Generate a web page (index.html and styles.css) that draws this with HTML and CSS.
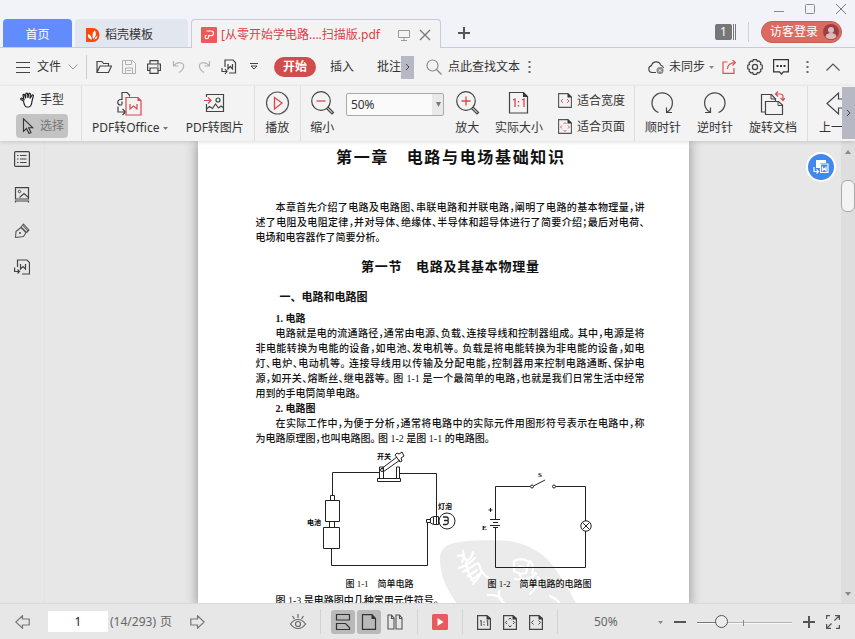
FILE: index.html
```
<!DOCTYPE html>
<html lang="zh-CN">
<head>
  <meta charset="UTF-8">
  <meta name="viewport" content="width=device-width, initial-scale=1.0">
  <title>[从零开始学电路....扫描版.pdf</title>
  <link rel="stylesheet" href="styles.css">
</head>
<body>
  <header class="titlebar">
    <nav class="tabs">
      <button class="tab tab-home">首页</button>
      <button class="tab tab-docer">
        <svg width="14" height="16" viewBox="0 0 14 16"><path d="M0 1h7a6.500 7 0 0 1 0 14H0z" fill="#f84a0c"/><path d="M6 12.500C2.500 12 1.500 9.500 2 7c2.200.5 3.600 2.500 4 5.500zM7 12C6 8 6.500 5 9 3.500c1.500 3.500 1 6.500-2 8.500zM8.500 12.500c.5-2 1.500-3 3-3.500-.2 2-1.200 3.200-3 3.500z" fill="#fff"/></svg>
        稻壳模板
      </button>
      <div class="tab tab-file">
        <svg width="16" height="16" viewBox="0 0 16 16"><rect width="16" height="16" rx="1" fill="#ee5a5a"/><path d="M5.500 4h4.700a2.300 2.300 0 0 1 0 4.600H7.500v1.400a1.700 1.700 0 1 1-1.700-1.700" fill="none" stroke="#fff" stroke-width="1.100"/></svg>
        <span class="tab-title">[从零开始学电路....扫描版.pdf</span>
        <svg class="screen-icon" width="12" height="12" viewBox="0 0 12 12"><path d="M.500 1.500h11v7H.500zM6 8.500v3M3 11.500h6" fill="none" stroke="#999"/></svg>
        <button class="plain" aria-label="关闭标签"><svg width="12" height="12" viewBox="0 0 12 12"><path d="M1 1l10 10M11 1L1 11" stroke="#777" stroke-width="1.300"/></svg></button>
      </div>
      <button class="plain new-tab" aria-label="新建"><svg width="12" height="12" viewBox="0 0 12 12"><path d="M6 0v12M0 6h12" stroke="#555" stroke-width="2"/></svg></button>
    </nav>
    <div class="window-side">
      <div class="window-buttons">
        <button class="plain" aria-label="最小化"><svg width="10" height="10" viewBox="0 0 10 10"><path d="M0 7.500h10" stroke="#8a8a8e"/></svg></button>
        <button class="plain" aria-label="最大化"><svg width="10" height="10" viewBox="0 0 10 10"><rect x=".5" y=".5" width="9" height="9" rx="1" fill="none" stroke="#8a8a8e"/></svg></button>
        <button class="plain" aria-label="关闭"><svg width="10" height="10" viewBox="0 0 10 10"><path d="M0 0l10 10M10 0L0 10" stroke="#77777c"/></svg></button>
      </div>
      <div class="account">
        <span class="tab-count"><span class="count">1</span><svg width="4" height="16" viewBox="0 0 4 16"><path d="M1.500 0v16M3.500 0v16" stroke="#777"/></svg></span>
        <span class="divider"></span>
        <button class="login">访客登录
          <svg width="16" height="16" viewBox="0 0 16 16"><circle cx="8" cy="8" r="8" fill="#9b3f47"/><circle cx="8" cy="6" r="3" fill="#dcb9bb"/><path d="M2.500 13a5.500 4 0 0 1 11 0 8 8 0 0 1-11 0z" fill="#dcb9bb"/></svg>
        </button>
      </div>
    </div>
  </header>

  <div class="menubar">
    <button class="file-menu">
      <svg width="14" height="12" viewBox="0 0 14 12"><path d="M0 1.500h14M0 6.500h14M0 11.500h14" stroke="#444"/></svg>
      文件
      <svg width="10" height="6" viewBox="0 0 10 6"><path d="M.5.500L5 5 9.500.500" fill="none" stroke="#999"/></svg>
    </button>
    <div class="quick">
      <button aria-label="打开"><svg width="16" height="14" viewBox="0 0 16 14"><path d="M1 12V1.500h5l1.500 2h5V6M1 12.500L4 6h11.500l-3 6.500z" fill="none" stroke="#444" stroke-width="1.200"/></svg></button>
      <button aria-label="保存"><svg width="14" height="14" viewBox="0 0 14 14"><path d="M.5.500h10l3 3v10H.5zM3.500.500v4h6v-4M3.500 13.500V8h7v5.500M5 10.500h4" fill="none" stroke="#b0b0b0"/></svg></button>
      <button aria-label="打印"><svg width="14" height="14" viewBox="0 0 14 14"><path d="M3 4V.600h8V4M3 10.500H.600V4h12.800v6.500H11M3 8h8v5.400H3zM10 6h1.500" fill="none" stroke="#444" stroke-width="1.200"/></svg></button>
      <button aria-label="撤销"><svg width="14" height="14" viewBox="0 0 14 14"><path d="M1.500 1v5h5M1.500 6C4 3 7 2 9.500 3s4 5-2.500 9.500" fill="none" stroke="#b5b5b5" stroke-width="1.200"/></svg></button>
      <button aria-label="重做"><svg width="14" height="14" viewBox="0 0 14 14"><path d="M12.500 1v5h-5M12.500 6C10 3 7 2 4.500 3s-4 5 2.500 9.500" fill="none" stroke="#b5b5b5" stroke-width="1.200"/></svg></button>
      <button aria-label="转为Word"><svg width="16" height="16" viewBox="0 0 16 16"><path d="M4 8V1h8l2.500 2.500V14H8M7 5v5l2.300-2.500L11.500 10V5M1 9v3.500h4.500M4 10l2 2.500L4 15" fill="none" stroke="#444" stroke-width="1.200"/></svg></button>
      <button aria-label="更多"><svg width="8" height="8" viewBox="0 0 8 8"><path d="M0 .5h8M1 3l3 3 3-3z" fill="none" stroke="#444"/></svg></button>
    </div>
    <nav class="menu">
      <button class="menu-item active">开始</button>
      <button class="menu-item">插入</button>
      <button class="menu-item last">批注</button>
      <button class="scroll-more" aria-label="更多菜单"><svg width="5" height="8" viewBox="0 0 5 8"><path d="M1 1l3 3-3 3" fill="none" stroke="#444"/></svg></button>
    </nav>
    <div class="search">
      <svg width="16" height="16" viewBox="0 0 16 16"><circle cx="6.500" cy="6.500" r="5.500" fill="none" stroke="#8c8c8c" stroke-width="1.200"/><path d="M10.500 10.500l5 5" stroke="#8c8c8c" stroke-width="1.400"/></svg>
      <input class="search-box" type="text" aria-label="查找文本" placeholder="点此查找文本">
      <button class="plain" aria-label="查找选项"><svg width="3" height="14" viewBox="0 0 3 14"><path d="M.500 1h2v2h-2zM.500 6h2v2h-2zM.500 11h2v2h-2z" fill="#666"/></svg></button>
    </div>
    <button class="sync">
      <svg width="17" height="15" viewBox="0 0 17 15"><path d="M8 12.500H4A3.500 3.500 0 0 1 3.500 5.600a4.800 4.800 0 0 1 9.300-.300A3.500 3.500 0 0 1 15.500 8" fill="none" stroke="#444" stroke-width="1.100"/><circle cx="12" cy="10.500" r="3.500" fill="#8a8a8a"/><path d="M10.800 9.300l2.400 2.400M13.200 9.300l-2.400 2.400" stroke="#fff"/></svg>
      未同步
      <svg width="5" height="3" viewBox="0 0 5 3"><path d="M0 0h5L2.500 3z" fill="#888"/></svg>
    </button>
    <div class="tools">
      <button aria-label="分享"><svg width="14" height="14" viewBox="0 0 14 14"><path d="M5.500 2H1v11.400h11V8M5.500 9c0-4 3-6.500 8-6.500M10.500 0l3 2.500-3 3" fill="none" stroke="#d9534f" stroke-width="1.200"/></svg></button>
      <button aria-label="设置"><svg width="16" height="16" viewBox="0 0 16 16"><path d="M6.300.700h3.400l.6 1.800 1.700-.500 2 2-.500 1.700 1.800.600v3.400l-1.800.600.500 1.700-2 2-1.700-.500-.6 1.800H6.300l-.6-1.800-1.700.500-2-2 .5-1.700-1.800-.6V6.300l1.800-.6L2 4l2-2 1.700.500z" fill="none" stroke="#444" stroke-width="1.200"/><circle cx="8" cy="8" r="2.600" fill="none" stroke="#444" stroke-width="1.200"/></svg></button>
      <button aria-label="反馈"><svg width="16" height="16" viewBox="0 0 16 16"><path d="M.600.600h14.800v12.300h-5L8.500 15l-2-2.100H.600z" fill="none" stroke="#333" stroke-width="1.200"/><path d="M3.500 6h2v2h-2zM7 6h2v2H7zM10.500 6h2v2h-2z" fill="#333"/></svg></button>
      <button aria-label="更多"><svg width="3" height="14" viewBox="0 0 3 14"><path d="M.500 1h2v2h-2zM.500 6h2v2h-2zM.500 11h2v2h-2z" fill="#666"/></svg></button>
      <button aria-label="收起功能区"><svg width="14" height="8" viewBox="0 0 14 8"><path d="M.5 7.500L7 1l6.500 6.500" fill="none" stroke="#555" stroke-width="1.200"/></svg></button>
    </div>
  </div>

  <div class="ribbon">
    <div class="group group-mode">
      <button class="mode">
        <svg width="16" height="16" viewBox="0 0 16 16"><path d="M3.500 9L1 7.500C.3 7 1 5.800 2 6.300l2 1.200L3 3.500c-.2-1.300 1.300-1.500 1.700-.3l1 3L5.800 2c0-1.200 1.600-1.200 1.800 0l.3 4 .8-4c.3-1.100 1.700-.9 1.700.300L10 6.500l1.800-3c.6-1 1.800-.4 1.500.700L12 9c-.3 3-1 5.500-3 6H6.500C5 14.500 4 12 3.500 9z" fill="#fff" stroke="#222" stroke-width="1.200"/></svg>
        手型
      </button>
      <button class="mode selected">
        <svg width="16" height="16" viewBox="0 0 16 16"><path d="M3.500.800v12.500l3-2.800L9 15.500l2-1-2.300-4.800h4z" fill="none" stroke="#333" stroke-width="1.100"/></svg>
        选择
      </button>
    </div>
    <div class="group group-pdf">
      <button class="tool">
        <svg width="25" height="25" viewBox="0 0 25 25"><path d="M5 9V1.500h5l2.500 2.500v1.500M5 8.500H3.500A2.300 2.300 0 1 0 3.500 14H5M5 10.500v3M1 15.500v5.500h7M5.500 18l3 3-3 3" fill="none" stroke="#444" stroke-width="1.200"/><path d="M9 6.500h12l3 3V24H9zM13 13v5l3.500-3 3.500 3v-5" fill="none" stroke="#d9484d" stroke-width="1.200"/><path d="M20.500 6.500V10H24z" fill="#d9484d"/></svg>
        <span>PDF转Office <svg width="5" height="3" viewBox="0 0 5 3" class="caret"><path d="M0 0h5L2.500 3z" fill="#777"/></svg></span>
      </button>
      <button class="tool">
        <svg width="25" height="25" viewBox="0 0 25 25"><path d="M4.500 6V3.500h17v17h-17V13M4.500 18l3-2.500 3 2 3-4.500 3 4 2.500-2 2.500 2" fill="none" stroke="#444" stroke-width="1.200"/><circle cx="16" cy="9" r="2" fill="none" stroke="#444" stroke-width="1.200"/><path d="M2 9.500h6.500M6 6.500l3 3-3 3" fill="none" stroke="#d9484d" stroke-width="1.200"/></svg>
        <span>PDF转图片</span>
      </button>
    </div>
    <div class="group">
      <button class="tool">
        <svg width="25" height="25" viewBox="0 0 25 25"><circle cx="12.500" cy="12" r="11" fill="none" stroke="#555" stroke-width="1.200"/><path d="M9.500 6.500v11.500l7.500-6z" fill="none" stroke="#d9484d" stroke-width="1.300"/></svg>
        <span>播放</span>
      </button>
    </div>
    <div class="group group-zoom">
      <button class="tool">
        <svg width="25" height="25" viewBox="0 0 25 25"><circle cx="11" cy="10" r="9.300" fill="none" stroke="#444" stroke-width="1.200"/><path d="M6.500 10h9" stroke="#d9484d" stroke-width="1.300"/><path d="M18 16l5.500 5.500-1.500 1.500-5.500-5.500" fill="none" stroke="#444" stroke-width="1.200"/></svg>
        <span>缩小</span>
      </button>
      <span class="combo">
        <select aria-label="缩放比例"><option>50%</option></select>
        <svg class="combo-arrow" width="5" height="5" viewBox="0 0 5 5"><path d="M0 0h5L2.500 5z" fill="#777"/></svg>
      </span>
      <button class="tool">
        <svg width="25" height="25" viewBox="0 0 25 25"><circle cx="11" cy="10" r="9.300" fill="none" stroke="#444" stroke-width="1.200"/><path d="M6.500 10h9M11 5.500v9" stroke="#d9484d" stroke-width="1.300"/><path d="M18 16l5.500 5.500-1.500 1.500-5.500-5.500" fill="none" stroke="#444" stroke-width="1.200"/></svg>
        <span>放大</span>
      </button>
      <button class="tool tool-gap">
        <svg width="25" height="25" viewBox="0 0 25 25"><path d="M3.500 1.500h14l4 4V22h-18z" fill="none" stroke="#444" stroke-width="1.200"/><path d="M17 1v5h5z" fill="#333"/><path d="M7 9l2-1v8M16 9l2-1v8M12.500 10v1.500M12.500 14v1.500" fill="none" stroke="#d9484d" stroke-width="1.300"/></svg>
        <span>实际大小</span>
      </button>
      <div class="fit">
        <button class="fit-item"><svg width="14" height="16" viewBox="0 0 14 16"><path d="M.600.600h9.400l3.400 3.400v10.400H.600z" fill="none" stroke="#555" stroke-width="1.100"/><path d="M9.500 0v4.500H14z" fill="#333"/><path d="M5 6L3 8l2 2M9 6l2 2-2 2" fill="none" stroke="#e06063"/></svg>适合宽度</button>
        <button class="fit-item"><svg width="14" height="16" viewBox="0 0 14 16"><path d="M.600.600h9.400l3.400 3.400v10.400H.600z" fill="none" stroke="#555" stroke-width="1.100"/><path d="M9.500 0v4.500H14z" fill="#333"/><path d="M4 6.500L2.500 8 4 9.500M10 6.500L11.500 8 10 9.500M5.500 5L7 3.500 8.500 5M5.500 11L7 12.500 8.500 11" fill="none" stroke="#e06063"/></svg>适合页面</button>
      </div>
    </div>
    <div class="group">
      <button class="tool">
        <svg width="25" height="25" viewBox="0 0 25 25"><path d="M8.500 21.500a10.200 10.200 0 1 1 8.500-.5M16.500 16.500V21.500H22" fill="none" stroke="#444" stroke-width="1.200"/></svg>
        <span>顺时针</span>
      </button>
      <button class="tool">
        <svg width="25" height="25" viewBox="0 0 25 25"><path d="M16.500 21.500a10.200 10.200 0 1 0-8.500-.5M8.500 16.500V21.500H3" fill="none" stroke="#444" stroke-width="1.200"/></svg>
        <span>逆时针</span>
      </button>
      <button class="tool">
        <svg width="25" height="25" viewBox="0 0 25 25"><path d="M5 21H1.500V3.500h10L15.500 8v2M5.500 10.500h13l4 3.500v9.500h-17z" fill="none" stroke="#444" stroke-width="1.200"/><path d="M11 3.500V8h5M18 10v4.500h5" fill="none" stroke="#444"/><path d="M16 3h4.500q2.500 0 2.500 3v3M18 .5L15.500 3 18 5.500M20.500 7L23 9.500 25 7" fill="none" stroke="#e04a4d" stroke-width="1.200"/></svg>
        <span>旋转文档</span>
      </button>
    </div>
    <div class="group group-page">
      <button class="tool">
        <svg width="38" height="25" viewBox="0 0 38 25"><path d="M20.500 2v6h12v9h-12v6L9 12.500z" fill="none" stroke="#444" stroke-width="1.200"/></svg>
        <span>上一页</span>
      </button>
    </div>
    <button class="scroll-more" aria-label="更多工具"><svg width="5" height="8" viewBox="0 0 5 8"><path d="M1 1l3 3-3 3" fill="none" stroke="#444"/></svg></button>
  </div>

  <main class="workspace">
    <aside class="sidebar">
      <button aria-label="目录"><svg width="16" height="16" viewBox="0 0 16 16"><rect x=".6" y=".6" width="14.800" height="14.800" rx="1" fill="none" stroke="#444" stroke-width="1.200"/><path d="M3 4.500h1.500M6 4.500h6.500M3 8h1.500M6 8h6.500M3 11.500h1.500M6 11.500h6.500" stroke="#444" stroke-width="1.200"/></svg></button>
      <button aria-label="缩略图"><svg width="16" height="16" viewBox="0 0 16 16"><path d="M1.500.600h13V12h-13zM1.500 15.500v-1.500h13v1.500M5.500 10.500L10 6.500l4.500 4" fill="none" stroke="#444" stroke-width="1.200"/><circle cx="5.500" cy="4.500" r="1.200" fill="none" stroke="#444"/></svg></button>
      <button aria-label="签名"><svg width="16" height="16" viewBox="0 0 16 16"><path d="M1.500 14.500L2 8.500 7 4.500l5 5-2.500 4zM7 4L9.500 1l5.500 6-2.500 2.500zM9 2.500l4.500 5" fill="none" stroke="#555" stroke-width="1.100" stroke-linejoin="round"/><circle cx="6" cy="10" r="1" fill="#444"/></svg></button>
      <button aria-label="转为Word"><svg width="16" height="16" viewBox="0 0 16 16"><path d="M3.500 8V1h9.500l2.500 2.500V15H8M6.500 5v5L9 7.500l2.500 2.500V5M.600 8.500v4H5M3.500 10.500L5.500 12.500l-2 2" fill="none" stroke="#444" stroke-width="1.200"/></svg></button>
    </aside>

    <div class="viewer">
      <article class="page">
        <h1 class="chapter">第一章　电路与电场基础知识</h1>
        <p class="para">本章首先介绍了电路及电路图、串联电路和并联电路，阐明了电路的基本物理量，讲<br>述了电阻及电阻定律，并对导体、绝缘体、半导体和超导体进行了简要介绍；最后对电荷、</p>
        <p class="para-end">电场和电容器作了简要分析。</p>
        <h2 class="section">第一节　电路及其基本物理量</h2>
        <h3 class="topic">一、电路和电路图</h3>
        <h4 class="item">1. 电路</h4>
        <p class="para">电路就是电的流通路径，通常由电源、负载、连接导线和控制器组成。 其中，电源是将<br>非电能转换为电能的设备，如电池、发电机等。 负载是将电能转换为非电能的设备，如电<br>灯、电炉、电动机等。 连接导线用以传输及分配电能，控制器用来控制电路通断、保护电<br>源，如开关、熔断丝、继电器等。 图 1-1 是一个最简单的电路，也就是我们日常生活中经常</p>
        <p class="para-end">用到的手电筒简单电路。</p>
        <h4 class="item">2. 电路图</h4>
        <p class="para">在实际工作中，为便于分析，通常将电路中的实际元件用图形符号表示在电路中，称</p>
        <p class="para-end">为电路原理图，也叫电路图。 图 1-2 是图 1-1 的电路图。</p>

        <div class="figures">
          <svg class="stamp" width="140" height="68" viewBox="438 538 140 68">
            <path d="M440 560c0-12 6-17 26-19 16-1 32-1 44 0 16 3 28 9 38 19 8 9 18 24 29 45H458c-12-16-18-30-18-46z" fill="#ebebeb"/>
            <path d="M458 556q6-2 8 4M463 551q2 8-1 11M473 552q-1 6-6 9M459 568q10-3 16-10M463 572l15-9M466 563q2 12 8 19M468 576l9-6M471 580l9-6M473 584q6-6 8-12M479 564q2 10 10 14M514 561q8-4 15 1l-3 11q-7 2-12-2zM519 566l7 2M530 561q5 6 2 12M515 579q12 2 21-5M520 575q3 6 1 9M524 588q8-6 11-15M530 594q7-6 9-16M538 577q3 3 1 8M488 595q8-1 14 4M499 591q-1 8 5 12M550 596q7 3 10 8" fill="none" stroke="#fff" stroke-width="2.200" stroke-linecap="round"/>
          </svg>
          <figure class="figure">
            <svg width="152" height="131" viewBox="304 446 152 131">
              <g fill="none" stroke="#222">
                <path d="M332.500 495v-22.500H379M399 473.500h37.500V517M331.500 548v17.500h96V523"/>
                <path d="M330.500 495.500h4v5h-4zM325.500 500.500h14v21h-14zM329.500 521.500h5v6h-5zM323.500 527.500h16v21h-16z"/>
                <path d="M377.500 478.500h23v3h-23zM379.500 478v-11h4v11M396.500 478v-11h3v11"/>
                <path d="M381 469l16-12M383 472l17-12M395 455l5 7 2-1-1-3 3-2-2-4-3 2-2-1z"/>
                <circle cx="382" cy="470" r="1.500"/>
                <path d="M426.500 519.500h4v3h-4zM430.500 518l3-1.500h5v8h-5l-3-1.500zM433.500 517v7M436.500 517v7"/>
                <circle cx="447" cy="521" r="8"/>
                <path d="M443 517h3q3 0 2 3.500h-4M448 520.500q1 4-2 4h-3" stroke-width="1.300"/>
              </g>
              <text class="fig-label" x="377" y="459">开关</text>
              <text class="fig-label" x="307" y="525">电池</text>
              <text class="fig-label" x="438" y="509">灯泡</text>
            </svg>
            <figcaption>图 1-1　简单电路</figcaption>
          </figure>
          <figure class="figure">
            <svg width="116" height="131" viewBox="482 446 116 131">
              <g fill="none" stroke="#222">
                <path d="M495.500 519v-32.500H530M533.500 486l11.500-6M556 486.500h29.500V521M585.500 531v36.500h-90V528"/>
                <circle cx="532" cy="486.500" r="1.500"/><circle cx="554" cy="486.500" r="1.500"/>
                <path d="M490 519.500h10M493 522.500h5M490 525.500h10M493 527.500h5"/>
                <circle cx="586" cy="526" r="5.200"/>
                <path d="M582.500 522.500l7 7M589.500 522.500l-7 7M488.500 510h4M490.500 508v4"/>
              </g>
              <text class="fig-label" x="538" y="477">S</text>
              <text class="fig-label" x="482" y="530">E</text>
            </svg>
            <figcaption>图 1-2　简单电路的电路图</figcaption>
          </figure>
        </div>
        <p class="para-start">图 1-3 是电路图中几种常用元件符号。</p>
      </article>
      <button class="convert" aria-label="转换文档"><svg width="16" height="16" viewBox="0 0 16 16"><path d="M3 1h10v3H7v5H3z" fill="#fff"/><path d="M7.500 5h7.500v8.500H7.500zM9.500 7.500v4l1.800-2 1.700 2v-4M1 8v4.500h4M3.500 10.500l2 2-2 2" fill="none" stroke="#fff" stroke-width="1.200"/></svg></button>
    </div>

    <div class="scrollbar">
      <svg width="6" height="4" viewBox="0 0 6 4"><path d="M0 4h6L3 0z" fill="#888"/></svg>
      <div class="scroll-thumb"></div>
      <svg width="6" height="4" viewBox="0 0 6 4"><path d="M0 0h6L3 4z" fill="#888"/></svg>
    </div>
  </main>

  <footer class="statusbar">
    <div class="pager">
      <button class="plain" aria-label="上一页"><svg width="15" height="14" viewBox="0 0 15 14"><path d="M7.500.800L.800 7l6.700 6.200V10h6.700V4H7.500z" fill="none" stroke="#777" stroke-width="1.200"/></svg></button>
      <input class="page-input" type="text" value="1" aria-label="页码">
      <span class="page-total">(14/293)<span class="unit">页</span></span>
      <button class="plain" aria-label="下一页"><svg width="15" height="14" viewBox="0 0 15 14"><path d="M7.500.800L14.200 7l-6.700 6.200V10H.800V4h6.700z" fill="none" stroke="#777" stroke-width="1.200"/></svg></button>
    </div>
    <div class="view-tools">
      <button class="plain eye" aria-label="护眼模式"><svg width="16" height="16" viewBox="0 0 16 16"><path d="M.5 10c4-6 11-6 15 0-4 6-11 6-15 0zM8 0v4M2.500 2l2 3M13.500 2l-2 3" fill="none" stroke="#666" stroke-width="1.200"/><circle cx="8" cy="10" r="2.500" fill="none" stroke="#666" stroke-width="1.200"/></svg></button>
      <div class="status-group">
        <button class="view on" aria-label="连续阅读"><svg width="16" height="16" viewBox="0 0 16 16"><path d="M1.500.500v5.500h13V.5zM1.500 15.500V9.500h9l4 4v2z" fill="none" stroke="#333" stroke-width="1.200"/></svg></button>
        <button class="view on" aria-label="单页"><svg width="16" height="16" viewBox="0 0 16 16"><path d="M1.500.600h9.500l3.500 4v10.800h-13z" fill="none" stroke="#333" stroke-width="1.200"/><path d="M10.500.500V5H15z" fill="#333"/></svg></button>
        <button class="view" aria-label="双页"><svg width="16" height="16" viewBox="0 0 16 16"><path d="M1 1h3.500L7 4v11H1zM9 1h3.500L15 4v11H9zM4.500 1v3.500H7M12.500 1v3.500H15" fill="none" stroke="#555" stroke-width="1.100"/></svg></button>
      </div>
      <div class="status-group group-play">
        <button class="plain" aria-label="播放"><svg width="16" height="16" viewBox="0 0 16 16"><rect width="16" height="16" rx="1.500" fill="#e85a5d"/><path d="M5.500 4v8l6-4z" fill="#fff"/></svg></button>
      </div>
      <div class="status-group group-size">
        <button class="plain" aria-label="实际大小"><svg width="14" height="16" viewBox="0 0 14 16"><path d="M.600 1.600H10l3.400 3v10.800H.600z" fill="none" stroke="#444" stroke-width="1.200"/><path d="M9.500 1v4.500H14z" fill="#333"/><path d="M3 7l1.200-.500V12M9.500 7l1.200-.500V12M7 7.500v1.200M7 10v1.200" fill="none" stroke="#444"/></svg></button>
        <button class="plain" aria-label="适合页面"><svg width="14" height="16" viewBox="0 0 14 16"><path d="M.600 1.600H10l3.400 3v10.800H.600z" fill="none" stroke="#444" stroke-width="1.200"/><path d="M9.500 1v4.500H14z" fill="#333"/><path d="M4 7L2.500 8.500 4 10M10 7l1.500 1.500L10 10M5.500 5.500L7 4l1.500 1.500M5.500 11.500L7 13l1.500-1.500" fill="none" stroke="#444"/></svg></button>
        <button class="plain" aria-label="适合宽度"><svg width="14" height="16" viewBox="0 0 14 16"><path d="M.600 1.600H10l3.400 3v10.800H.600z" fill="none" stroke="#444" stroke-width="1.200"/><path d="M9.500 1v4.500H14z" fill="#333"/><path d="M4.500 6.500l-2 2 2 2M9.500 6.500l2 2-2 2" fill="none" stroke="#444"/></svg></button>
      </div>
      <div class="status-group group-scale">
        <span class="scale">
          <select aria-label="显示比例"><option>50%</option></select>
          <svg class="combo-arrow" width="5" height="3" viewBox="0 0 5 3"><path d="M0 0h5L2.500 3z" fill="#888"/></svg>
        </span>
        <button class="plain" aria-label="缩小"><svg width="12" height="12" viewBox="0 0 12 12"><path d="M0 6h12" stroke="#555" stroke-width="2"/></svg></button>
        <input class="slider" type="range" min="0" max="100" value="22" aria-label="缩放">
        <button class="plain" aria-label="放大"><svg width="12" height="12" viewBox="0 0 12 12"><path d="M6 0v12M0 6h12" stroke="#555" stroke-width="2"/></svg></button>
        <button class="plain" aria-label="全屏"><svg width="14" height="14" viewBox="0 0 14 14"><path d="M.600 4V.600H4M9 .600h4.400V5M13.400.600L8.500 5.500M.600 9v4.400H5M.600 13.400l4.900-4.900M10 13.400h3.400V10" fill="none" stroke="#555" stroke-width="1.200"/></svg></button>
      </div>
    </div>
  </footer>
</body>
</html>
```
FILE: styles.css
```
* {
  box-sizing: border-box;
}
body {
  margin: 0;
  height: 100vh;
  display: flex;
  flex-direction: column;
  overflow: hidden;
  background: #f3f3f3;
  color: #333;
  font: 12px/16px "Noto Sans", "Noto Sans CJK SC", sans-serif;
}
button, input, select {
  font: inherit;
  color: inherit;
  border: 0;
  padding: 0;
  margin: 0;
  background: none;
}
button {
  white-space: nowrap;
}
svg {
  flex: none;
  display: block;
}
.plain {
  display: flex;
  align-items: center;
  justify-content: center;
}

/* title bar */
.titlebar {
  flex: none;
  height: 48px;
  display: flex;
  justify-content: space-between;
  background: #f2f3f8;
  border-bottom: 1px solid #c8cade;
}
.tabs {
  display: flex;
  align-items: flex-end;
  gap: 3px;
  padding-left: 3px;
}
.tab {
  height: 28px;
  display: flex;
  align-items: center;
  padding: 3px 11px 0;
  border-radius: 4px 4px 0 0;
}
.tab-home {
  width: 69px;
  justify-content: center;
  background: #628cfb;
  color: #fff;
}
.tab-docer {
  width: 113px;
  gap: 5px;
  background: #e2e6ef;
}
.tab-file {
  width: 250px;
  height: 29px;
  margin-bottom: -1px;
  padding: 2px 9px 0;
  background: #f3f3f3;
  border: 1px solid #c8cade;
  border-bottom: 0;
  color: #d9414a;
}
.tab-title {
  flex: 1;
  margin-left: 4px;
  white-space: nowrap;
}
.screen-icon {
  margin-right: 9px;
}
.new-tab {
  height: 28px;
  margin-left: 14px;
}
.window-side {
  display: flex;
  flex-direction: column;
  align-items: flex-end;
  gap: 7px;
  padding: 4px 9px 0 0;
}
.window-buttons {
  display: flex;
  gap: 21px;
}
.account {
  display: flex;
  align-items: center;
  gap: 12px;
  padding-right: 4px;
}
.tab-count {
  display: flex;
}
.count {
  width: 17px;
  height: 16px;
  background: #777;
  border-radius: 2px;
  color: #fff;
  text-align: center;
}
.divider {
  width: 1px;
  height: 20px;
  background: #d0d0d6;
}
.login {
  height: 22px;
  display: flex;
  align-items: center;
  gap: 5px;
  padding: 0 2px 0 8px;
  border: 1px solid #c95c52;
  border-radius: 11px;
  background: #db6b60;
  color: #fff;
}

/* menu bar */
.menubar {
  flex: none;
  height: 38px;
  display: flex;
  align-items: center;
  padding: 0 9px 0 16px;
}
.file-menu {
  height: 24px;
  display: flex;
  align-items: center;
  gap: 7px;
  padding-right: 8px;
  border-right: 1px solid #ccc;
}
.quick, .tools {
  display: flex;
}
.quick {
  padding: 0 8px 0 4px;
}
.quick button, .tools button {
  width: 25px;
  height: 24px;
  display: flex;
  align-items: center;
  justify-content: center;
}
.tools button {
  width: 26px;
}
.menu {
  display: flex;
  align-items: center;
  gap: 6px;
}
.menu-item {
  height: 20px;
  padding: 0 8px;
  border-radius: 10px;
}
.menu-item.active {
  padding: 0 9px;
  background: #d04c4d;
  color: #fff;
  font-weight: bold;
}
.menu-item.last {
  padding: 0 0 0 9px;
  margin-right: -6px;
}
.scroll-more {
  flex: none;
  width: 13px;
  height: 23px;
  display: flex;
  align-items: center;
  justify-content: center;
  background: #b6b9c3;
}
.search {
  display: flex;
  align-items: center;
  gap: 6px;
  margin-left: 12px;
}
.search-box {
  width: 74px;
}
.search-box::placeholder {
  color: #333;
  opacity: 1;
}
.sync {
  display: flex;
  align-items: center;
  gap: 4px;
  margin-left: auto;
  padding-right: 2px;
}

/* ribbon */
.ribbon {
  flex: none;
  height: 55px;
  display: flex;
  overflow: hidden;
  z-index: 1;
  box-shadow: 0 1px 4px rgba(0, 0, 0, 0.15);
}
.group {
  flex: none;
  display: flex;
  gap: 16px;
  padding: 5px 10px 0;
  border-right: 1px solid #dedede;
}
.group-mode {
  flex-direction: column;
  gap: 2px;
  padding: 2px 13px 0 16px;
}
.group-pdf {
  gap: 18px;
}
.mode {
  width: 52px;
  height: 24px;
  display: flex;
  align-items: center;
  gap: 4px;
  padding: 0 4px;
  border-radius: 4px;
}
.mode.selected {
  background: #c3c3c3;
  color: #777;
}
.tool {
  display: flex;
  flex-direction: column;
  align-items: center;
  gap: 4px;
  height: 45px;
}
.caret {
  display: inline-block;
  vertical-align: middle;
}
.group-zoom {
  gap: 11px;
  padding: 5px 9px 0;
}
.tool-gap {
  margin: 0 4px;
}
.combo, .scale {
  position: relative;
}
.combo {
  width: 98px;
}
.combo select {
  width: 100%;
  height: 23px;
  margin-top: 2px;
  padding-left: 4px;
  appearance: none;
  border: 1px solid #aaa;
  border-radius: 2px;
  background: linear-gradient(to left, #e9e9e9 11px, #fafafa 11px);
}
.combo-arrow {
  position: absolute;
  right: 3px;
  top: 11px;
  pointer-events: none;
}
.fit {
  display: flex;
  flex-direction: column;
  gap: 10px;
  padding-top: 2px;
}
.fit-item {
  height: 16px;
  display: flex;
  align-items: center;
  gap: 5px;
}
.group-page {
  flex: 1;
  min-width: 0;
  overflow: hidden;
  border-right: 0;
}
.ribbon .scroll-more {
  height: 52px;
  margin-top: 1px;
}

/* workspace */
.workspace {
  flex: 1;
  min-height: 0;
  display: flex;
  background: #e7e7e7;
}
.sidebar {
  flex: none;
  width: 45px;
  display: flex;
  flex-direction: column;
  border-right: 1px solid #e2e2e2;
}
.sidebar button {
  height: 36px;
  display: flex;
  align-items: center;
  justify-content: center;
}
.viewer {
  flex: 1;
  position: relative;
  overflow: hidden;
}
.page {
  width: 491px;
  min-height: 100%;
  margin: 0 auto;
  padding: 7px 44px 0 58px;
  background: #fff;
  box-shadow: 0 0 12px rgba(0, 0, 0, 0.4);
  color: #111;
  font: 500 10px/15px "Liberation Serif", "Noto Sans CJK SC", serif;
  font-feature-settings: "halt";
}
.page h1, .page h2, .page h3, .page h4, .page p, .figure {
  margin: 0;
}
.page h1, .page h2 {
  font-weight: bold;
  line-height: 20px;
  text-align-last: justify;
}
.page .chapter {
  width: 228px;
  margin: 0 auto 32px;
  font-size: 16px;
}
.page .section {
  width: 178px;
  margin: 12px auto 10px;
  font-size: 13px;
}
.page .topic {
  margin-bottom: 4px;
  padding-left: 24px;
  font-size: 11px;
  line-height: 20px;
  font-feature-settings: normal;
}
.item {
  padding-left: 20px;
  font-size: 10px;
}
.para {
  text-indent: 20px;
  text-align: justify;
  text-align-last: justify;
  white-space: nowrap;
}
.para-start {
  padding-left: 20px;
}
.figures {
  position: relative;
  display: flex;
  gap: 26px;
  padding-left: 48px;
  margin-bottom: 2px;
}
.stamp {
  position: absolute;
  left: 182px;
  top: 92px;
}
.figure {
  position: relative;
  display: flex;
  flex-direction: column;
  align-items: center;
}
.figure figcaption {
  font-size: 9px;
  line-height: 14px;
  white-space: nowrap;
}
.fig-label {
  font-size: 7px;
  font-weight: bold;
}
.convert {
  position: absolute;
  right: 5px;
  top: 11px;
  width: 30px;
  height: 30px;
  display: flex;
  align-items: center;
  justify-content: center;
  border: 2px solid #fff;
  border-radius: 50%;
  background: #4087ee;
}
.scrollbar {
  flex: none;
  width: 14px;
  display: flex;
  flex-direction: column;
  align-items: center;
  gap: 26px;
  padding: 9px 0 7px;
  background: #dedede;
}
.scroll-thumb {
  width: 14px;
  height: 32px;
  margin-bottom: auto;
  border: 1px solid #aaa;
  border-radius: 6px;
  background: #f3f3f3;
}

/* status bar */
.statusbar {
  flex: none;
  height: 36px;
  display: flex;
  align-items: center;
  justify-content: space-between;
  padding: 0 15px;
  border-top: 1px solid #d9d9d9;
  background: #e7e7e7;
  color: #666;
}
.pager, .view-tools, .status-group {
  display: flex;
  align-items: center;
}
.pager {
  gap: 18px;
}
.page-input {
  width: 60px;
  height: 21px;
  background: #fff;
  color: #222;
  text-align: center;
}
.page-total {
  margin-left: -16px;
}
.unit {
  margin-left: 4px;
}
.eye {
  margin-right: 14px;
}
.status-group {
  height: 25px;
  gap: 2px;
  padding: 0 10px;
  border-left: 1px solid #d2d2d2;
}
.view {
  width: 24px;
  height: 24px;
  display: flex;
  align-items: center;
  justify-content: center;
  border-radius: 3px;
}
.view.on {
  background: #b9b9b9;
}
.group-play {
  padding: 0 14px;
}
.group-size {
  gap: 12px;
  padding: 0 14px;
}
.group-scale {
  gap: 11px;
  padding: 0 0 0 36px;
}
.scale select {
  width: 69px;
  appearance: none;
}
.scale .combo-arrow {
  right: 0;
  top: 7px;
}
.slider {
  width: 95px;
  height: 14px;
  appearance: none;
  background:
    linear-gradient(#888, #888) 46px 5px / 1px 6px no-repeat,
    linear-gradient(to right, #777 24px, #b5b5b5 24px) 0 7px / 100% 1px no-repeat,
    linear-gradient(#f8f8f8, #f8f8f8) 0 8px / 100% 1px no-repeat;
}
.slider::-webkit-slider-thumb {
  appearance: none;
  width: 13px;
  height: 13px;
  border: 1px solid #555;
  border-radius: 50%;
  background: #ececec;
}
```
